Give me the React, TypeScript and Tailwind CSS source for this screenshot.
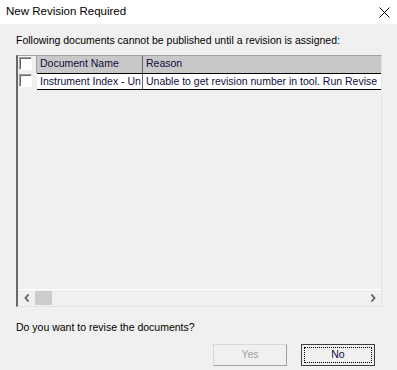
import React from "react";

const Check: React.FC = () => (
  <div className="w-[13px] h-[13px] border-l border-t border-[#a0a0a0] border-r border-b border-r-white border-b-white bg-white shadow-[inset_1px_1px_0_#696969]" />
);

export default function App() {
  return (
    <div className="w-[397px] h-[370px] bg-[#f0f0f0] flex flex-col text-[10.5px] text-black font-['Liberation_Sans',Arial,sans-serif] overflow-hidden whitespace-nowrap">
      {/* title bar */}
      <div className="h-[24px] bg-white flex items-center justify-between pl-[6px] pr-[7px] shrink-0">
        <span className="text-[11.5px] text-black">New Revision Required</span>
        <svg width="11" height="11" viewBox="0 0 11 11">
          <path d="M0.5 0.5 L10.5 10.5 M10.5 0.5 L0.5 10.5" stroke="#000" strokeWidth="1" />
        </svg>
      </div>

      <div className="flex flex-col px-[16px] pt-[9px]">
        <div className="h-[14px] leading-[14px]">
          Following documents cannot be published until a revision is assigned:
        </div>

        {/* list */}
        <div className="mt-[8px] w-[366px] h-[252px] border-l-2 border-t border-l-[#696969] border-t-[#a0a0a0] border-r border-b border-r-[#e3e3e3] border-b-[#e3e3e3] flex flex-col">
          <div className="flex-1 flex flex-col">
            {/* header */}
            <div className="flex h-[17px] leading-[15px]">
              <div className="w-[19px] flex items-start justify-start pl-[1px] pt-[1px] border-r border-[#a0a0a0]">
                <Check />
              </div>
              <div className="w-[106px] bg-[#c8c8c8] pl-[3px] border-r border-[#646464] text-[#0e0e40]">Document Name</div>
              <div className="flex-1 bg-[#c8c8c8] pl-[3px] text-[#0e0e40]">Reason</div>
            </div>
            {/* row */}
            <div className="flex h-[17px] leading-[15px]">
              <div className="w-[19px] flex items-start justify-start pl-[1px] pt-[1px]">
                <Check />
              </div>
              <div className="flex-1 flex bg-white border-t border-b border-black overflow-hidden">
                <div className="w-[106px] pl-[3px] border-r border-[#646464] overflow-hidden text-[#0e0e40]">Instrument Index - Un</div>
                <div className="flex-1 pl-[3px] overflow-hidden text-[#0e0e40]">Unable to get revision number in tool. Run Revise</div>
              </div>
            </div>
          </div>
          {/* horizontal scrollbar */}
          <div className="h-[17px] flex items-center border-t border-white bg-[#f0f0f0]">
            <div className="w-[17px] flex items-center justify-center">
              <svg width="6" height="8" viewBox="0 0 6 8">
                <path d="M4.5 0.5 L1.5 4 L4.5 7.5" stroke="#606060" strokeWidth="1.8" fill="none" />
              </svg>
            </div>
            <div className="w-[17px] h-[14px] bg-[#cdcdcd]" />
            <div className="flex-1" />
            <div className="w-[17px] flex items-center justify-center">
              <svg width="6" height="8" viewBox="0 0 6 8">
                <path d="M1.5 0.5 L4.5 4 L1.5 7.5" stroke="#606060" strokeWidth="1.8" fill="none" />
              </svg>
            </div>
          </div>
        </div>

        <div className="mt-[13px] h-[14px] leading-[14px]">Do you want to revise the documents?</div>

        {/* buttons */}
        <div className="mt-[10px] flex justify-end gap-[14px] pr-[6px]">
          <div className="w-[74px] h-[22px] border border-[#d9d9d9] border-r-[#a0a0a0] border-b-[#a0a0a0] bg-[#f0f0f0] flex items-center justify-center text-[#a0a0a0]">
            Yes
          </div>
          <div className="w-[74px] h-[22px] border border-[#404040] bg-[#f0f0f0] p-[2px] flex">
            <div className="flex-1 border border-dotted border-black flex items-center justify-center text-[#0e0e40]">
              No
            </div>
          </div>
        </div>
      </div>
    </div>
  );
}
